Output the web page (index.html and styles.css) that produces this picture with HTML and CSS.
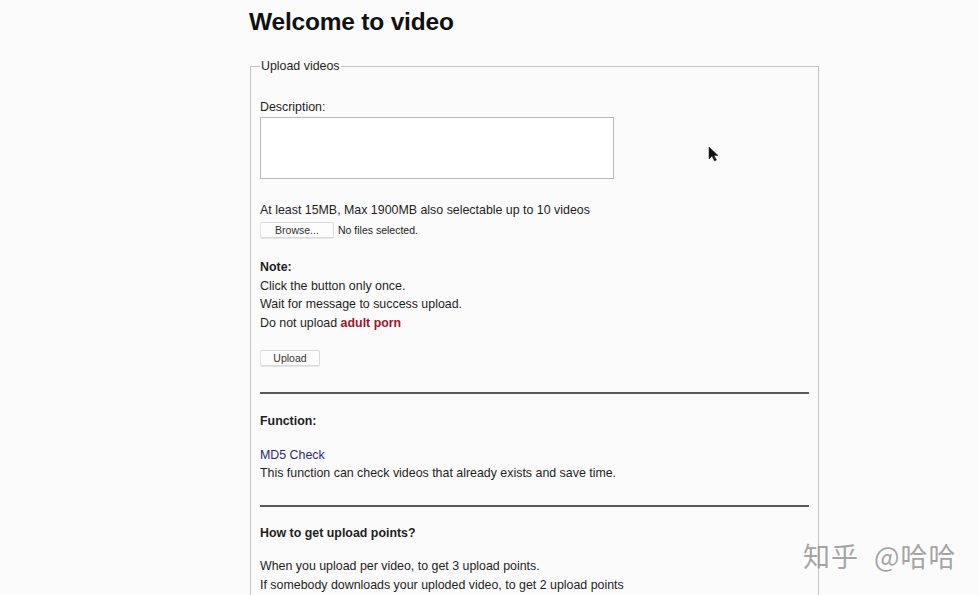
FILE: index.html
```html
<!DOCTYPE html>
<html>
<head>
<meta charset="utf-8">
<link rel="stylesheet" href="styles.css">
</head>
<body>
<div class="page">
  <h1 class="title">Welcome to video</h1>
  <fieldset class="box">
    <legend class="legend">Upload videos</legend>
    <div class="label">Description:</div>
    <textarea class="desc"></textarea>
    <div class="hint">At least 15MB, Max 1900MB also selectable up to 10 videos</div>
    <div class="file-row"><span class="btn browse">Browse...</span><span class="nofile">No files selected.</span></div>
    <div class="note">
      <div class="bold">Note:</div>
      <div>Click the button only once.</div>
      <div>Wait for message to success upload.</div>
      <div>Do not upload <span class="warn">adult porn</span></div>
    </div>
    <div class="upload-row"><span class="btn upload">Upload</span></div>
    <hr class="rule">
    <div class="bold sec-title">Function:</div>
    <div class="func">
      <div class="link">MD5 Check</div>
      <div>This function can check videos that already exists and save time.</div>
    </div>
    <hr class="rule rule2">
    <div class="bold sec-title2">How to get upload points?</div>
    <div class="points">
      <div>When you upload per video, to get 3 upload points.</div>
      <div>If somebody downloads your uploded video, to get 2 upload points</div>
    </div>
  </fieldset>
</div>
<div class="cursor"><svg width="12" height="17" viewBox="0 0 12 17"><path d="M1 1 L1 13 L4 10 L6.5 15 L8.5 14 L6 9.5 L10 9.5 Z" fill="#111" stroke="#333" stroke-width="0.6"/></svg></div>
<div class="watermark">知乎 @哈哈</div>
</body>
</html>
```
FILE: styles.css
```css
html, body {
  margin: 0;
  padding: 0;
  background: #fcfbfb;
  height: 595px;
  overflow: hidden;
}
body {
  font-family: "Liberation Sans", Arial, sans-serif;
  font-size: 12.4px;
  color: #1e1e1e;
  position: relative;
}
.page {
  padding-left: 249px;
  width: 570px;
}
.title {
  font-size: 24.5px;
  font-weight: bold;
  margin: 0;
  padding-top: 8px;
  line-height: 28px;
  color: #111;
  letter-spacing: -0.2px;
}
.box {
  margin: 23px 0 0 1px;
  border: 1px solid #c4c4c4;
  padding: 0 9px 0 9px;
  width: 549px;
}
.legend {
  padding: 0 1px;
  font-size: 12.4px;
  color: #1e1e1e;
  margin-left: 0;
}
.label {
  margin-top: 25px;
  line-height: 18px;
}
.desc {
  display: block;
  margin: 1px 0 0 0;
  width: 350px;
  height: 58px;
  border: 1px solid #b8b8b8;
  background: #fff;
  resize: none;
  padding: 1px;
}
.hint {
  margin-top: 22px;
  line-height: 18px;
}
.file-row {
  display: flex;
  align-items: center;
  margin-top: 3px;
  height: 16px;
}
.btn {
  display: inline-flex;
  align-items: center;
  justify-content: center;
  height: 14px;
  border: 1px solid #dadada;
  border-left-color: #e4e4e4;
  background: #fdfdfd;
  font-size: 10.5px;
  color: #333;
  border-radius: 2px;
  box-shadow: 0 1px 0 #e6e6e6;
}
.browse { width: 72px; }
.nofile {
  font-size: 10.5px;
  margin-left: 4px;
  color: #222;
}
.note {
  margin-top: 20px;
  line-height: 18.5px;
}
.bold { font-weight: bold; }
.warn {
  color: #a3142a;
  font-weight: bold;
}
.upload-row {
  margin-top: 18px;
  height: 16px;
  display: flex;
}
.upload { width: 58px; }
.rule {
  margin: 26px 0 0 0;
  border: none;
  border-top: 2px solid #5a5a5a;
  height: 0;
}
.sec-title {
  margin-top: 18px;
  line-height: 18px;
}
.func {
  margin-top: 16px;
  line-height: 18px;
}
.link { color: #2a2a7a; }
.rule2 { margin-top: 23px; }
.sec-title2 {
  margin-top: 17px;
  line-height: 18px;
}
.points {
  margin-top: 15px;
  line-height: 19px;
}
.cursor {
  position: absolute;
  left: 708px;
  top: 146px;
}
.watermark {
  position: absolute;
  left: 803px;
  top: 536px;
  font-family: "Noto Sans CJK SC", sans-serif;
  font-size: 27px;
  color: rgba(140,140,140,0.8);
  letter-spacing: 1px;
  word-spacing: 8px;
  text-shadow: 1px 1px 0 rgba(255,255,255,0.6);
}
```
